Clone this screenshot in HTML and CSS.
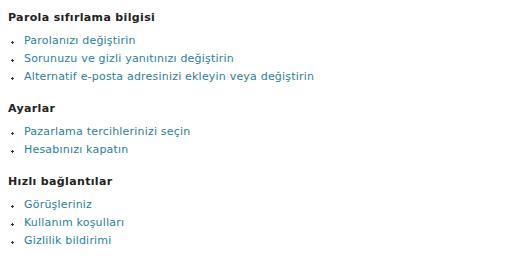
FILE: index.html
```html
<!DOCTYPE html>
<html lang="tr">
<head>
<meta charset="utf-8">
<link rel="stylesheet" href="styles.css">
</head>
<body>
<div class="page">
  <section class="group">
    <h2 class="title">Parola sıfırlama bilgisi</h2>
    <ul class="links">
      <li><a href="#">Parolanızı değiştirin</a></li>
      <li><a href="#">Sorunuzu ve gizli yanıtınızı değiştirin</a></li>
      <li><a href="#">Alternatif e-posta adresinizi ekleyin veya değiştirin</a></li>
    </ul>
  </section>
  <section class="group">
    <h2 class="title">Ayarlar</h2>
    <ul class="links">
      <li><a href="#">Pazarlama tercihlerinizi seçin</a></li>
      <li><a href="#">Hesabınızı kapatın</a></li>
    </ul>
  </section>
  <section class="group">
    <h2 class="title">Hızlı bağlantılar</h2>
    <ul class="links">
      <li><a href="#">Görüşleriniz</a></li>
      <li><a href="#">Kullanım koşulları</a></li>
      <li><a href="#">Gizlilik bildirimi</a></li>
    </ul>
  </section>
</div>
</body>
</html>
```
FILE: styles.css
```css
html, body {
  margin: 0;
  padding: 0;
  background: #ffffff;
}
.page {
  padding: 10px 8px 0 8px;
  font-family: "DejaVu Sans", Verdana, sans-serif;
  font-size: 11px;
  display: flex;
  flex-direction: column;
  gap: 15px;
}
.title {
  margin: 0;
  font-size: 11px;
  font-weight: bold;
  color: #222222;
  line-height: 16px;
  letter-spacing: 0.35px;
}
.links {
  list-style: none;
  margin: 6px 0 0 0;
  padding: 0;
}
.links li {
  position: relative;
  padding-left: 16px;
  line-height: 18px;
}
.links li::before {
  content: "";
  position: absolute;
  left: 3px;
  top: 9px;
  width: 3px;
  height: 3px;
  background:
    linear-gradient(#333, #333) center / 3px 1px no-repeat,
    linear-gradient(#333, #333) center / 1px 3px no-repeat;
}
.links a {
  color: #2a8299;
  text-decoration: none;
  letter-spacing: 0.2px;
}
```
